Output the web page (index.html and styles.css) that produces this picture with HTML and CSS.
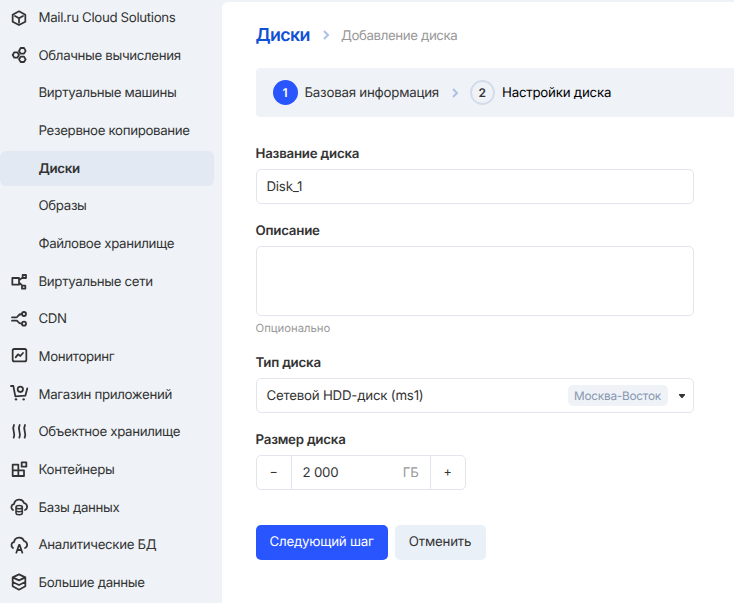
FILE: index.html
```
<!DOCTYPE html>
<html lang="ru">
<head>
<meta charset="utf-8">
<title>Добавление диска</title>
<link rel="stylesheet" href="styles.css">
</head>
<body>
<div class="app">
  <nav class="sidebar">
    <a class="item"><svg class="icon" viewBox="0 0 54 54"><path d="M27 7 46 17V38L27 48 8 38V17ZM15 21 27 28 39 21M27 28V41"/></svg>Mail.ru Cloud Solutions</a>
    <a class="item"><svg class="icon" viewBox="0 0 54 54"><path d="M13 19H22L27 27 22 35H13L8 27ZM32 6H42L47 14.500 42 23H32L27 15ZM32 32H42L47 40.500 42 48H32L27 40Z"/></svg>Облачные вычисления</a>
    <a class="item">Виртуальные машины</a>
    <a class="item">Резервное копирование</a>
    <a class="item active">Диски</a>
    <a class="item">Образы</a>
    <a class="item">Файловое хранилище</a>
    <a class="item"><svg class="icon" viewBox="0 0 54 54"><path d="M7 18H27V38H7ZM38 9H48V18H38ZM36 41H46V50H36ZM27 25 38 16M27 31 37 41"/></svg>Виртуальные сети</a>
    <a class="item"><svg class="icon" viewBox="0 0 54 54"><circle cx="42" cy="12" r="6"/><circle cx="42" cy="41" r="6"/><path d="M6 22H19C25 22 23 12 35 12M6 32H19C25 32 23 41 35 41"/></svg>CDN</a>
    <a class="item"><svg class="icon" viewBox="0 0 54 54"><rect x="8" y="6" width="41" height="37" rx="5"/><path d="M17 31 24 22 31 27 39 18"/></svg>Мониторинг</a>
    <a class="item"><svg class="icon" viewBox="0 0 54 54"><path d="M3 3H10L16 34 46 32 52 10"/><circle cx="31" cy="13" r="8"/><circle class="dot" cx="18" cy="43" r="3.500"/><circle class="dot" cx="41" cy="43" r="3.500"/></svg>Магазин приложений</a>
    <a class="item"><svg class="icon" viewBox="0 0 54 54"><path d="M12 6C4 21 18 27 11 44M29 6C21 21 35 27 28 44M45 6C37 21 51 27 44 44"/></svg>Объектное хранилище</a>
    <a class="item"><svg class="icon" viewBox="0 0 54 54"><path d="M8 14H25V48M8 31H42V48H8V14M35 7H49V20H35Z"/></svg>Контейнеры</a>
    <a class="item"><svg class="icon" viewBox="0 0 54 54"><path d="M9 36C1 30 4 19 12 18 15 2 37 0 42 15 54 18 54 32 45 36"/><path class="thin" d="M18 27V45C18 52 37 52 37 45V27C37 21 18 21 18 27 18 34 37 34 37 27M18 37C18 43 37 43 37 37"/></svg>Базы данных</a>
    <a class="item"><svg class="icon" viewBox="0 0 54 54"><path d="M9 36C1 30 4 19 12 18 15 2 37 0 42 15 54 18 54 32 45 36M19 50 27 27H29L37 50M22 42H34"/></svg>Аналитические БД</a>
    <a class="item"><svg class="icon" viewBox="0 0 54 54"><path d="M27 4 46 13V40L27 50 8 40V13ZM8 13 27 22 46 13M8 27 27 36 46 27"/></svg>Большие данные</a>
  </nav>
  <main class="content">
    <header class="crumbs">
      <h1 class="title">Диски</h1>
      <svg class="chevron" viewBox="0 0 6 10"><path d="M1 1 5 5 1 9"/></svg>
      <span class="crumb">Добавление диска</span>
    </header>
    <div class="steps">
      <span class="num current">1</span>
      <span class="step first">Базовая информация</span>
      <svg class="chevron" viewBox="0 0 6 10"><path d="M1 1 5 5 1 9"/></svg>
      <span class="num next">2</span>
      <span class="step second">Настройки диска</span>
    </div>
    <form class="form">
      <div class="field name">
        <div class="label"><span>Название диска</span></div>
        <div class="box"><span class="value">Disk_1</span></div>
      </div>
      <div class="field description">
        <div class="label"><span>Описание</span></div>
        <div class="box area"></div>
        <div class="hint">Опционально</div>
      </div>
      <div class="field type">
        <div class="label"><span>Тип диска</span></div>
        <div class="box"><span class="value">Сетевой HDD-диск (ms1)</span><span class="zone">Москва-Восток</span><svg class="caret" viewBox="0 0 6 4"><path d="M0 0H6V1L3.500 4H2.500L0 1Z"/></svg></div>
      </div>
      <div class="field size">
        <div class="label"><span>Размер диска</span></div>
        <div class="stepper"><span class="btn-step">−</span><span class="amount">2 000<span class="unit">ГБ</span></span><span class="btn-step">+</span></div>
      </div>
      <div class="actions"><span class="button primary">Следующий шаг</span><span class="button secondary">Отменить</span></div>
    </form>
  </main>
</div>
</body>
</html>
```
FILE: styles.css
```
* { box-sizing: border-box; }
body { margin: 0; width: 734px; height: 603px; overflow: hidden; background: #eff3f8; font-family: Inter, sans-serif; font-size: 13.3px; letter-spacing: -0.23px; color: #333; text-rendering: geometricPrecision; }
.app { display: flex; height: 603px; }
.sidebar { width: 221.500px; flex: none; display: flex; flex-direction: column; gap: 2.660px; letter-spacing: -0.350px; }
.item { width: 214px; height: 35px; flex: none; display: flex; align-items: center; justify-content: flex-start; padding-top: 1px; padding-left: 38.500px; border-radius: 6px; white-space: nowrap; }
.item.active { background: #e2e9f3; font-weight: 600; }
.icon { width: 18px; height: 18px; flex: none; margin: -1px 10.500px 0 -28.500px; fill: none; stroke: #333; stroke-width: 5.300; stroke-linejoin: round; stroke-linecap: round; overflow: visible; }
.icon .dot { fill: #333; stroke: none; }
.icon .thin { stroke-width: 4.500; }
.content { flex: 1; min-width: 0; margin-top: 2px; padding-left: 34px; background: #fff; border-top-left-radius: 6px; }
.crumbs { height: 66px; display: flex; align-items: center; white-space: nowrap; }
.title { margin: 0; font-size: 17.800px; font-weight: 600; letter-spacing: -0.650px; color: #0f50d5; width: 67px; }
.chevron { width: 6px; height: 10px; flex: none; fill: none; stroke: #adbfe6; stroke-width: 2; overflow: visible; }
.crumb { margin-left: 12.500px; padding-top: 2px; color: #999; letter-spacing: -0.400px; }
.steps { height: 49px; display: flex; align-items: center; padding-left: 17px; background: #eff3f8; border-radius: 4px 0 0 4px; white-space: nowrap; }
.num { width: 25px; height: 25px; flex: none; border-radius: 50%; display: flex; align-items: center; justify-content: center; font-size: 12px; font-weight: 600; }
.num.current { background: #2955ff; color: #fff; }
.num.next { border: 2px solid #d3dce9; margin-left: 12px; }
.step { margin-left: 7px; }
.step.first { width: 147px; }
.step.second { margin-left: 7.500px; color: #000; }
.form { width: 438px; padding-top: 27px; }
.label { height: 18px; padding-top: 1px; display: flex; align-items: center; font-weight: 600; margin-bottom: 7px; }
.box { height: 35px; display: flex; align-items: center; padding: 0 8px 0 10px; border: 1px solid #e3e5ee; border-radius: 5px; }
.field.description { margin-top: 17px; }
.box.area { height: 70px; }
.hint { height: 16px; margin-top: 4px; line-height: 16px; font-size: 11.300px; letter-spacing: 0; color: #999; }
.field.type { margin-top: 17px; margin-bottom: 17px; }
.zone { margin-left: auto; height: 21px; width: 100px; border-radius: 5px; background: #eff3f8; color: #8796af; font-size: 11.800px; display: flex; align-items: center; justify-content: center; }
.caret { width: 6px; height: 4px; margin-left: 11px; fill: #333; }
.stepper { width: 210px; height: 35px; display: flex; border: 1px solid #e3e5ee; border-radius: 5px; }
.btn-step { width: 34px; padding-bottom: 1px; display: flex; align-items: center; justify-content: center; font-size: 12.500px; }
.amount { flex: 1; display: flex; align-items: center; justify-content: space-between; padding: 0 11px; border: solid #e3e5ee; border-width: 0 1px; }
.unit { color: #999; }
.actions { margin-top: 35px; display: flex; gap: 7px; }
.button { height: 35px; padding-bottom: 2px; display: flex; align-items: center; justify-content: center; border-radius: 5px; }
.primary { width: 132px; background: #2955ff; color: #fff; }
.secondary { width: 91px; background: #eaf0f8; }
```
